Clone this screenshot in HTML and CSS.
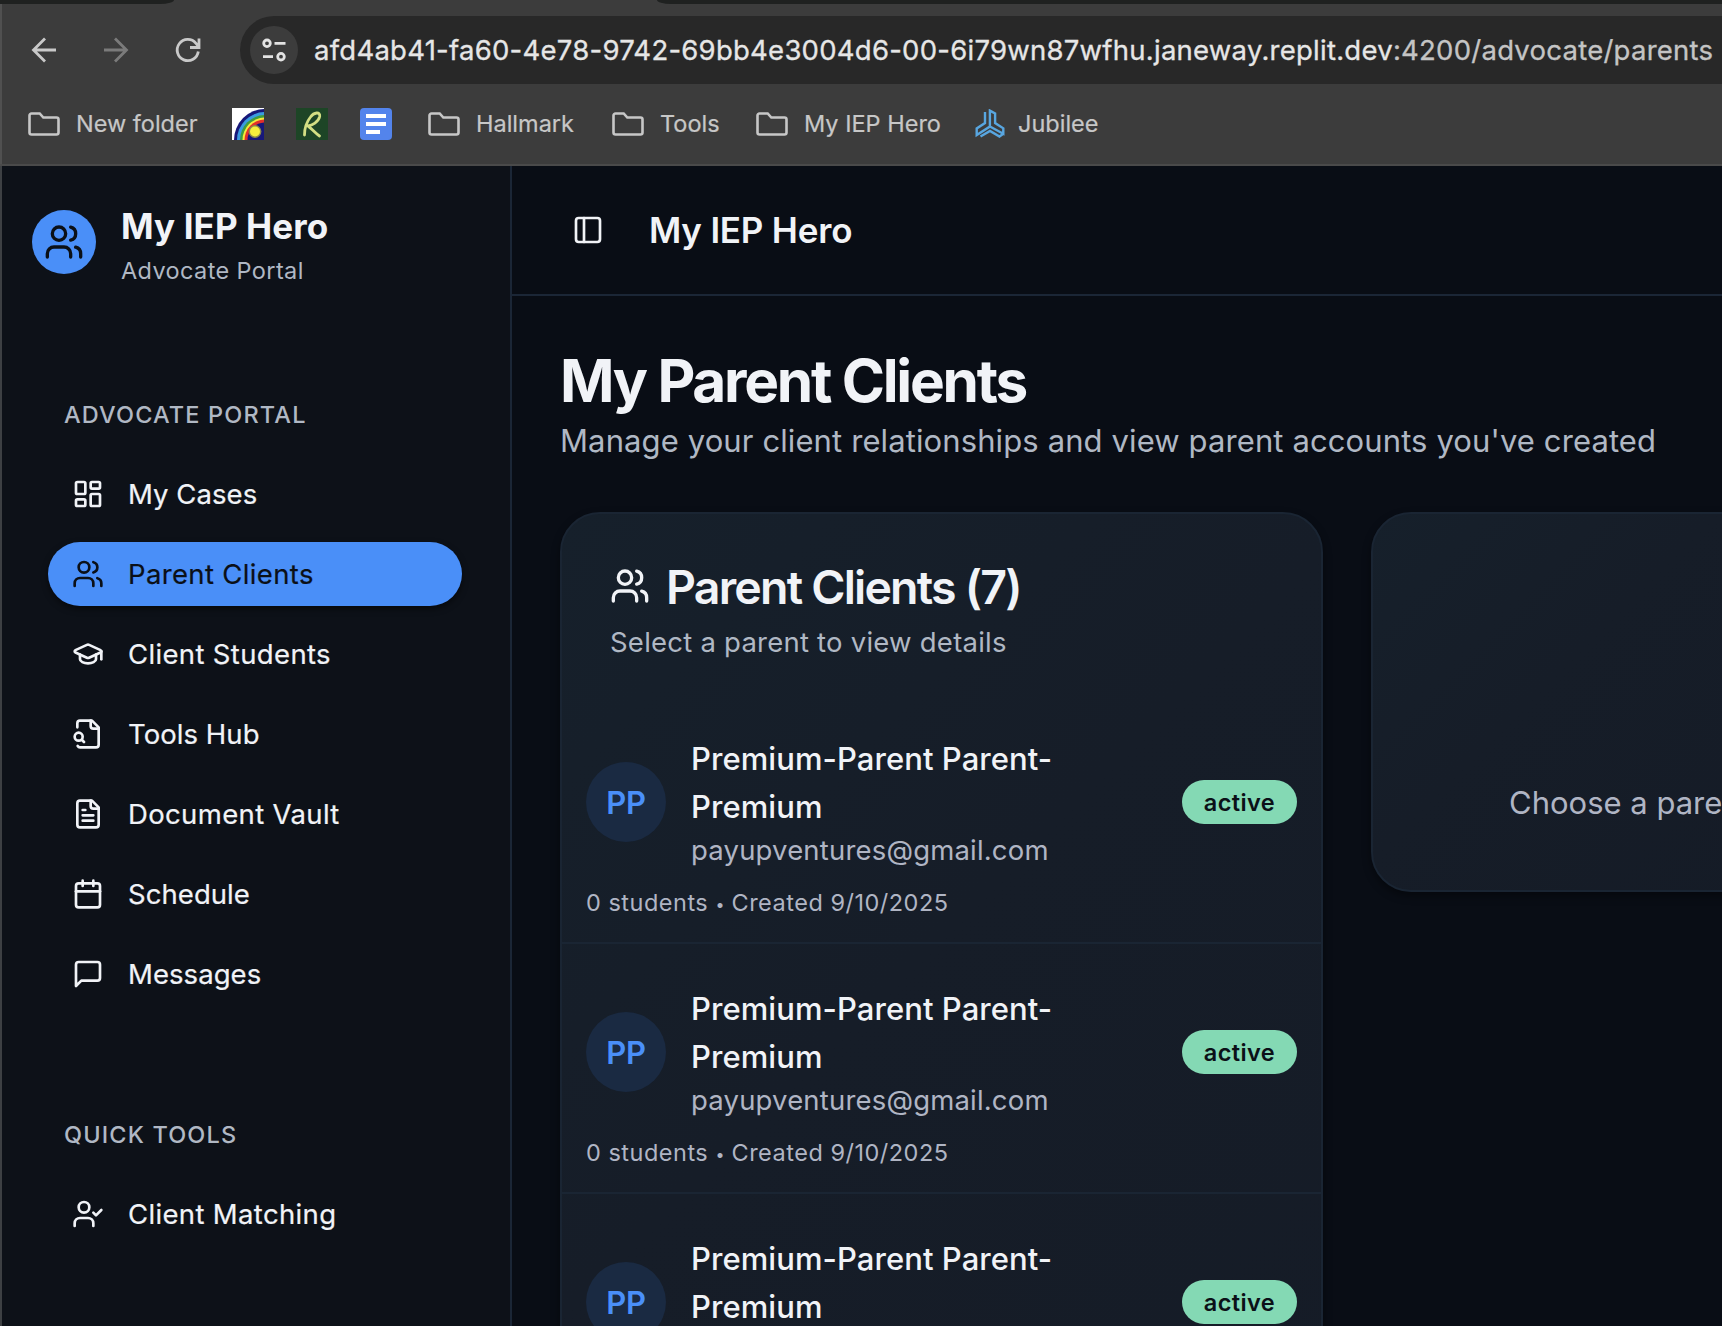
FILE: index.html
```html
<!DOCTYPE html>
<html lang="en">
<head>
<meta charset="utf-8">
<title>My IEP Hero</title>
<link rel="stylesheet" href="styles.css">
</head>
<body>
<svg class="defs" width="0" height="0">
  <symbol id="users" viewBox="0 0 24 24"><path d="M16 21v-2a4 4 0 0 0-4-4H6a4 4 0 0 0-4 4v2"/><circle cx="9" cy="7" r="4"/><path d="M22 21v-2a4 4 0 0 0-3-3.87"/><path d="M16 3.13a4 4 0 0 1 0 7.75"/></symbol>
  <symbol id="folder" viewBox="0 0 32 24"><path d="M1.500 3.500a2 2 0 0 1 2-2h8.200l3.600 4h13.200a2 2 0 0 1 2 2v13a2 2 0 0 1-2 2h-25a2 2 0 0 1-2-2z"/></symbol>
</svg>
<div class="window">
  <header class="chrome">
    <div class="tabstrip"><i class="tab-left"></i><i class="tab-right"></i></div>
    <div class="toolbar">
      <svg class="nav-icon" viewBox="0 0 32 32"><path d="M28 16H6M17 4.500L5.500 16L17 27.500"/></svg>
      <svg class="nav-icon dim" viewBox="0 0 32 32"><path d="M4 16h22M15 4.500L26.500 16L15 27.500"/></svg>
      <svg class="nav-icon" viewBox="0 0 32 32"><path d="M26.300 17.500A10.600 10.600 0 1 1 24 9.300L26.500 12.500M27 4.500v9h-9"/></svg>
      <div class="omnibox">
        <span class="site-info"><svg viewBox="0 0 28 28" width="28" height="28"><circle cx="7" cy="7.300" r="3.300"/><path d="M14.500 7.300h11M3 20.700h10"/><circle cx="21" cy="20.700" r="3.300"/></svg></span>
        <span class="url">afd4ab41-fa60-4e78-9742-69bb4e3004d6-00-6i79wn87wfhu.janeway.replit.dev<span class="path">:4200/advocate/parents</span></span>
      </div>
    </div>
    <nav class="bookmarks">
      <span class="bm w-new"><svg class="folder"><use href="#folder"/></svg><span>New folder</span></span>
      <svg class="fav w-fav" viewBox="0 0 32 32"><path fill="#fff" d="M0 0h32v32H0z"/><circle cx="33" cy="32" r="31" fill="#17187a"/><circle cx="33" cy="32" r="28" fill="#3a9be0"/><circle cx="33" cy="32" r="25" fill="#3f9d3f"/><circle cx="33" cy="32" r="22.500" fill="#f6e93a"/><circle cx="33" cy="32" r="20.500" fill="#e3302a"/><circle cx="33" cy="32" r="17.500" fill="#17187a"/><circle cx="23" cy="23.500" r="6.400" fill="#8f8c48"/><circle cx="23" cy="23.500" r="5" fill="#f7ee3c"/></svg>
      <svg class="fav w-fav" viewBox="0 0 32 32"><path fill="#1d4526" d="M0 0h32v32H0z"/><path fill="none" stroke="#d3df83" stroke-width="2.800" stroke-linecap="round" stroke-linejoin="round" d="M8.500 27C8.500 22 10.500 14 14.500 9C18 4 24.500 3.500 23.700 8.500C22.500 14 16 17.500 12 18C15 20 19 25 23.500 28"/></svg>
      <svg class="fav w-doc" viewBox="0 0 32 32"><rect width="32" height="32" rx="4" fill="#5384ec"/><path fill="#fff" d="M6 6h20v4H6zM6 14h20v4H6zM6 22h14v4H6z"/></svg>
      <span class="bm w-hall"><svg class="folder"><use href="#folder"/></svg><span>Hallmark</span></span>
      <span class="bm w-tools"><svg class="folder"><use href="#folder"/></svg><span>Tools</span></span>
      <span class="bm w-iep"><svg class="folder"><use href="#folder"/></svg><span>My IEP Hero</span></span>
      <span class="bm jub"><svg class="jub-icon" viewBox="-0.500 0 30 30"><path d="M9.500 3V14L1.200 19.500V26L14.400 17.500V1.600L19.600 4.500V14L27.800 19.300V24.800L14.400 17.500M5 27.500L14.500 22L24 27.500L27.800 24.800"/></svg><span>Jubilee</span></span>
    </nav>
  </header>
  <div class="app">
    <aside class="sidebar">
      <div class="brand">
        <span class="brand-mark"><svg class="ic i40"><use href="#users"/></svg></span>
        <div class="brand-text"><div class="brand-name">My IEP Hero</div><div class="brand-sub">Advocate Portal</div></div>
      </div>
      <section class="group">
        <h2 class="label">Advocate Portal</h2>
        <a class="item tight"><svg class="ic" viewBox="0 0 24 24"><rect width="7" height="9" x="3" y="3" rx="1"/><rect width="7" height="5" x="14" y="3" rx="1"/><rect width="7" height="9" x="14" y="12" rx="1"/><rect width="7" height="5" x="3" y="16" rx="1"/></svg>My Cases</a>
        <a class="item active"><svg class="ic"><use href="#users"/></svg>Parent Clients</a>
        <a class="item"><svg class="ic" viewBox="0 0 24 24"><path d="M21.420 10.922a1 1 0 0 0-.019-1.838L12.830 5.180a2 2 0 0 0-1.660 0L2.600 9.080a1 1 0 0 0 0 1.832l8.570 3.908a2 2 0 0 0 1.660 0z"/><path d="M22 10v6"/><path d="M6 12.500V16a6 3 0 0 0 12 0v-3.500"/></svg>Client Students</a>
        <a class="item tight"><svg class="ic" viewBox="0 0 24 24"><path d="M14 2v4a2 2 0 0 0 2 2h4"/><path d="M4.268 21a2 2 0 0 0 1.727 1H18a2 2 0 0 0 2-2V7l-5-5H6a2 2 0 0 0-2 2v3"/><path d="m9 18-1.500-1.500"/><circle cx="5" cy="14" r="3"/></svg>Tools Hub</a>
        <a class="item"><svg class="ic" viewBox="0 0 24 24"><path d="M15 2H6a2 2 0 0 0-2 2v16a2 2 0 0 0 2 2h12a2 2 0 0 0 2-2V7Z"/><path d="M14 2v4a2 2 0 0 0 2 2h4"/><path d="M10 9H8M16 13H8M16 17H8"/></svg>Document Vault</a>
        <a class="item tight"><svg class="ic" viewBox="0 0 24 24"><path d="M8 2v4M16 2v4"/><rect width="18" height="18" x="3" y="4" rx="2"/><path d="M3 10h18"/></svg>Schedule</a>
        <a class="item tight"><svg class="ic" viewBox="0 0 24 24"><path d="M21 15a2 2 0 0 1-2 2H7l-4 4V5a2 2 0 0 1 2-2h14a2 2 0 0 1 2 2z"/></svg>Messages</a>
      </section>
      <section class="group">
        <h2 class="label">Quick Tools</h2>
        <a class="item"><svg class="ic" viewBox="0 0 24 24"><path d="m16 11 2 2 4-4"/><path d="M16 21v-2a4 4 0 0 0-4-4H6a4 4 0 0 0-4 4v2"/><circle cx="9" cy="7" r="4"/></svg>Client Matching</a>
      </section>
    </aside>
    <main class="main">
      <div class="topbar"><svg class="ic" viewBox="0 0 24 24"><rect width="18" height="18" x="3" y="3" rx="2"/><path d="M9 3v18"/></svg><span class="topbar-title">My IEP Hero</span></div>
      <div class="content">
        <h1 class="title">My Parent Clients</h1>
        <p class="lead">Manage your client relationships and view parent accounts you've created</p>
        <div class="columns">
          <section class="card list">
            <div class="card-head">
              <h3 class="card-title"><svg class="ic i40"><use href="#users"/></svg><span>Parent Clients (7)</span></h3>
              <p class="card-sub">Select a parent to view details</p>
            </div>
            <article class="client">
              <div class="client-main"><span class="avatar">PP</span><div class="who"><div class="name">Premium-Parent Parent-<br>Premium</div><div class="email">payupventures@gmail.com</div></div><span class="badge">active</span></div>
              <div class="meta">0 students <span class="dot">•</span> Created 9/10/2025</div>
            </article>
            <article class="client">
              <div class="client-main"><span class="avatar">PP</span><div class="who"><div class="name">Premium-Parent Parent-<br>Premium</div><div class="email">payupventures@gmail.com</div></div><span class="badge">active</span></div>
              <div class="meta">0 students <span class="dot">•</span> Created 9/10/2025</div>
            </article>
            <article class="client">
              <div class="client-main"><span class="avatar">PP</span><div class="who"><div class="name">Premium-Parent Parent-<br>Premium</div></div><span class="badge">active</span></div>
            </article>
          </section>
          <section class="card detail"><p class="empty">Choose a parent</p></section>
        </div>
      </div>
    </main>
  </div>
</div>
</body>
</html>
```

FILE: styles.css
```css
* { box-sizing: border-box; }
body { margin: 0; background: #090d15; font-family: Inter, "Liberation Sans", sans-serif; color: #f1f3f7; }
h1, h2, h3, p { margin: 0; font-weight: inherit; }
.defs { display: block; position: absolute; }
.window { width: 1722px; height: 1326px; overflow: hidden; display: flex; flex-direction: column; }

/* browser chrome */
.chrome { flex: none; height: 166px; background: #3c3c3c; border-bottom: 2px solid #4a4a4a; }
.tabstrip { height: 4px; display: flex; justify-content: space-between; }
.tab-left { width: 174px; height: 4px; background: #1f2120; border-bottom-right-radius: 14px 4px; }
.tab-right { width: 1065px; height: 4px; background: #1f2120; border-bottom-left-radius: 14px 4px; }
.toolbar { height: 80px; display: flex; align-items: center; padding: 12px 0 0 26px; border-left: 2px solid #505050; }
.nav-icon { width: 32px; height: 32px; margin-right: 40px; flex: none; fill: none; stroke: #c9c9c9; stroke-width: 2.800; }
.nav-icon.dim { stroke: #7b7b7b; }
.omnibox { flex: 1; height: 68px; margin-left: -4px; border-radius: 34px 0 0 34px; background: #282828; display: flex; align-items: center; padding-left: 10px; }
.site-info { width: 48px; height: 48px; flex: none; border-radius: 50%; background: #3c3c3c; display: flex; align-items: center; justify-content: center; margin-right: 16px; }
.site-info svg { fill: none; stroke: #e3e3e3; stroke-width: 2.800; }
.url { font-size: 27.500px; line-height: 36px; letter-spacing: .25px; white-space: nowrap; color: #e6e6e6; -webkit-text-stroke: .3px; }
.path { color: #c4c4c4; }
.bookmarks { height: 80px; display: flex; align-items: center; padding-left: 26px; border-left: 2px solid #505050; font-size: 23.500px; color: #c7c7c7; white-space: nowrap; -webkit-text-stroke: .2px; }
.bm { display: flex; align-items: center; flex: none; gap: 16px; }
.bm span { padding-bottom: 2px; }
.folder { width: 32px; height: 24px; fill: none; stroke: #c7c7c7; stroke-width: 2.600; }
.fav { width: 32px; height: 32px; flex: none; }
.w-new { width: 204px; }
.w-fav { margin-right: 32px; }
.w-doc { margin-right: 36px; }
.w-hall { width: 184px; }
.w-tools { width: 144px; }
.w-iep { width: 219px; }
.jub { gap: 13px; }
.jub-icon { width: 30px; height: 30px; fill: none; stroke: #58a6e0; stroke-width: 2.400; }

/* application shell */
.app { flex: 1; min-height: 0; display: flex; border-left: 2px solid #3d4043; }
.ic { width: 32px; height: 32px; flex: none; fill: none; stroke: currentColor; stroke-width: 2; stroke-linecap: round; stroke-linejoin: round; }
.i40 { width: 40px; height: 40px; }
.sidebar { width: 510px; flex: none; background: #0d1118; border-right: 2px solid #1b2636; }
.brand { display: flex; gap: 25px; padding: 32px 30px 0; height: 200px; }
.brand-mark { width: 64px; height: 64px; margin-top: 12px; border-radius: 50%; background: #4a8ff8; color: #0b1017; display: flex; align-items: center; justify-content: center; }
.brand-name { font-size: 35px; line-height: 56px; font-weight: 700; letter-spacing: .1px; white-space: nowrap; }
.brand-sub { font-size: 23.500px; line-height: 34px; letter-spacing: .38px; color: #b0b8c4; }
.group { padding: 16px 46px 0; height: 720px; }
.label { padding: 1px 0 0 16px; height: 64px; line-height: 64px; font-size: 23.500px; font-weight: 550; letter-spacing: 1.150px; text-transform: uppercase; color: #b0b8c4; margin-bottom: 16px; }
.item { display: flex; align-items: center; gap: 24px; height: 64px; margin-bottom: 16px; padding-left: 24px; border-radius: 32px; font-size: 27.500px; letter-spacing: .35px; white-space: nowrap; width: 414px; -webkit-text-stroke: .2px; }
.item.tight { letter-spacing: .06px; }
.item.active { background: #4a8ff8; color: #0b1017; box-shadow: 0 3px 6px rgba(0,0,0,.5); }

.main { flex: 1; min-width: 0; background: #090d15; overflow: hidden; }
.topbar { height: 130px; border-bottom: 2px solid #1b2636; padding-left: 60px; display: flex; align-items: center; gap: 45px; }
.topbar-title { font-size: 35px; font-weight: 600; line-height: 56px; letter-spacing: -.2px; }
.content { padding: 48px 48px 0; width: 1640px; }
.title { font-size: 58.500px; font-weight: 700; line-height: 72px; letter-spacing: -2.250px; padding-top: 1px; }
.lead { font-size: 31px; line-height: 48px; letter-spacing: .11px; color: #b0b8c4; white-space: nowrap; }
.columns { display: flex; gap: 48px; padding-top: 47px; align-items: flex-start; }
.card { border: 2px solid #1a2533; border-radius: 40px; background: linear-gradient(135deg, #16202b 0%, #161d28 30%, #141a25 100%); box-shadow: 0 4px 8px rgba(0,0,0,.4); }
.list { width: 763px; height: 1900px; flex: none; }
.detail { width: 763px; height: 380px; flex: none; }
.card-head { padding: 48px 48px 0; height: 180px; }
.card-title { display: flex; align-items: center; gap: 16px; height: 48px; font-size: 46.500px; font-weight: 600; letter-spacing: -1.800px; white-space: nowrap; }
.card-title span { padding-top: 2px; }
.card-sub { font-size: 27.500px; line-height: 40px; letter-spacing: .23px; padding-top: 12px; color: #b0b8c4; }
.client { height: 250px; border-bottom: 2px solid #1a2533; padding: 40px 24px 0; }
.client-main { display: flex; align-items: center; height: 136px; }
.avatar { width: 80px; height: 80px; border-radius: 50%; background: #1a2a42; color: #4a8ff8; font-size: 31px; font-weight: 600; letter-spacing: -.3px; display: flex; align-items: center; justify-content: center; }
.who { flex: 1; height: 136px; padding-left: 25px; white-space: nowrap; }
.name { font-size: 31px; line-height: 48px; font-weight: 500; letter-spacing: .07px; padding-top: 1px; margin-bottom: -1px; }
.email { font-size: 27.500px; line-height: 40px; letter-spacing: .18px; color: #b0b5c4; }
.badge { width: 115px; height: 44px; border-radius: 22px; background: #84d9b4; color: #0b1017; font-size: 23.500px; font-weight: 600; letter-spacing: .4px; display: flex; align-items: center; justify-content: center; }
.meta { margin-top: 17px; font-size: 23.500px; line-height: 32px; letter-spacing: .5px; color: #b0b5c4; }
.dot { display: inline-block; width: 9px; font-size: 16px; line-height: 16px; letter-spacing: 0; vertical-align: 1px; }
.empty { padding: 265px 0 0 136px; font-size: 31px; line-height: 48px; color: #b0b5c4; white-space: nowrap; }
```
